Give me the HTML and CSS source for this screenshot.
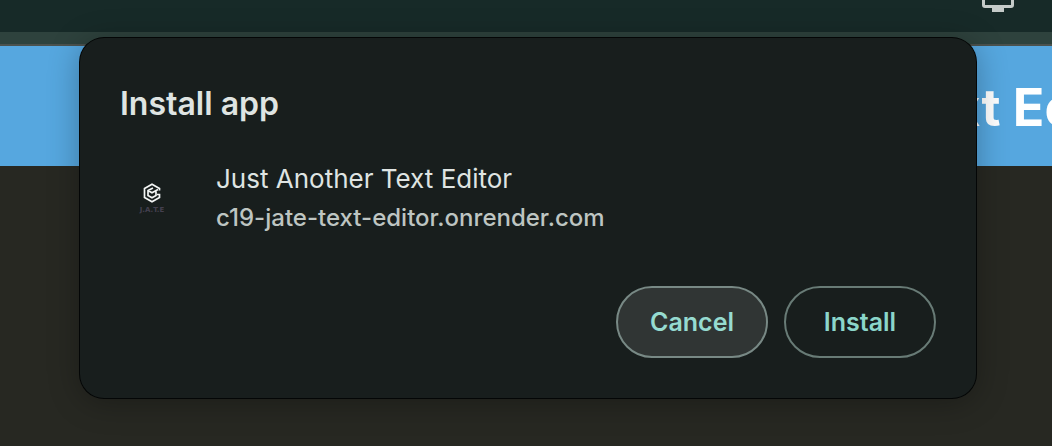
FILE: index.html
```html
<!DOCTYPE html>
<html lang="en">
<head>
<meta charset="utf-8">
<meta name="viewport" content="width=device-width, initial-scale=1">
<title>Install app</title>
<link rel="stylesheet" href="styles.css">
</head>
<body>
<div class="toolbar">
  <svg class="toolbar-icon" width="32" height="12" viewBox="0 0 32 12" aria-hidden="true">
    <path d="M1.500 -4V5Q1.500 6.500 3 6.500H29Q30.500 6.500 30.500 5V-4" fill="none" stroke="#c5cbc9" stroke-width="3"/>
    <path d="M10 7H22V12H10Z" fill="#c5cbc9"/>
  </svg>
</div>
<div class="bookmarks"></div>
<header class="banner"><h1 class="banner-title">Text Editor</h1></header>
<main class="editor"></main>

<section class="dialog" role="dialog" aria-labelledby="dialog-title">
  <h2 class="dialog-title" id="dialog-title">Install app</h2>
  <div class="app">
    <svg class="app-icon" width="64" height="64" viewBox="0 0 64 64" role="img" aria-label="J.A.T.E">
      <g fill="none" stroke="#f4f6f5" stroke-width="1.700">
        <path d="M39.500 24.500V22.500L32 18.200L24.500 22.500V31.500L32 35.800L39.500 31.500V28.500H37"/>
        <path d="M33 22L28 24.500V29.500L32 31.800L36 29.500V25.500M28 24.500L32 26.800L38 23.500"/>
      </g>
      <text class="app-icon-text" x="32" y="46" text-anchor="middle">J.A.T.E</text>
    </svg>
    <div class="app-info">
      <p class="app-name">Just Another Text Editor</p>
      <p class="app-url">c19-jate-text-editor.onrender.com</p>
    </div>
  </div>
  <div class="actions">
    <button class="button button-active" type="button">Cancel</button>
    <button class="button" type="button">Install</button>
  </div>
</section>
</body>
</html>
```
FILE: styles.css
```css
* {
  box-sizing: border-box;
}

body {
  margin: 0;
  min-height: 100vh;
  display: flex;
  flex-direction: column;
  position: relative;
  overflow: hidden;
  background: #272822;
  font-family: Inter, "Liberation Sans", sans-serif;
}

.toolbar {
  height: 32px;
  padding-right: 38px;
  display: flex;
  justify-content: flex-end;
  background: #172a28;
}

.bookmarks {
  height: 14px;
  background: #2e423d;
  border-bottom: 2px solid #4b514d;
}

.banner {
  height: 120px;
  padding-top: 4px;
  padding-left: 890px;
  display: flex;
  align-items: center;
  overflow: hidden;
  background: #56a7df;
}

.banner-title {
  margin: 0;
  color: #fff;
  font-size: 52px;
  line-height: 64px;
  font-weight: 700;
  white-space: nowrap;
}

.editor {
  flex: 1;
}

.dialog {
  position: absolute;
  top: 38px;
  left: 80px;
  right: 76px;
  padding: 44px 40px 40px;
  border-radius: 24px;
  background: #181e1d;
  box-shadow: 0 0 0 1px #040606, 0 4px 32px rgba(0, 0, 0, 0.3);
}

.dialog-title {
  margin: 0;
  color: #dfe4e2;
  font-size: 32px;
  line-height: 44px;
  font-weight: 600;
}

.app {
  margin-top: 33px;
  display: flex;
  align-items: center;
  gap: 32px;
}

.app-icon {
  flex: none;
}

.app-icon-text {
  fill: #44404f;
  font-family: "DejaVu Sans", sans-serif;
  font-size: 7px;
  font-weight: 700;
}

.app-name,
.app-url {
  margin: 0;
  line-height: 39px;
}

.app-name {
  color: #dfe4e2;
  font-size: 26px;
}

.app-url {
  color: #bec5c2;
  font-size: 24px;
  font-weight: 500;
}

.actions {
  margin-top: 49px;
  display: flex;
  justify-content: flex-end;
  gap: 16px;
}

.button {
  width: 152px;
  height: 72px;
  padding: 0;
  border: 2px solid #687b76;
  border-radius: 36px;
  background: transparent;
  color: #8bd6ca;
  font-family: inherit;
  font-size: 25px;
  font-weight: 600;
}

.button-active {
  border-color: #788985;
  background: #303534;
  color: #96dbd0;
}
```
